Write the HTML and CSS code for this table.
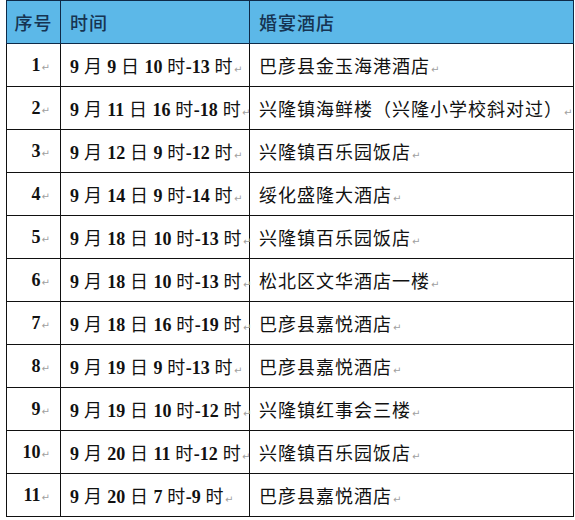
FILE: index.html
```html
<!DOCTYPE html>
<html lang="zh-CN">
<head>
<meta charset="utf-8">
<link rel="stylesheet" href="styles.css">
</head>
<body>
<table class="sched">
  <colgroup><col class="c1"><col class="c2"><col class="c3"></colgroup>
  <thead>
    <tr><th class="num">序号</th><th>时间</th><th>婚宴酒店</th></tr>
  </thead>
  <tbody>
    <tr><td class="num">1<span class="pm">↵</span></td><td class="t"><b>9</b> 月 <b>9</b> 日 <b>10</b> 时<b>-13</b> 时<span class="pm">↵</span></td><td>巴彦县金玉海港酒店<span class="pm">↵</span></td></tr>
    <tr><td class="num">2<span class="pm">↵</span></td><td class="t"><b>9</b> 月 <b>11</b> 日 <b>16</b> 时<b>-18</b> 时<span class="pm">↵</span></td><td>兴隆镇海鲜楼（兴隆小学校斜对过）<span class="pm">↵</span></td></tr>
    <tr><td class="num">3<span class="pm">↵</span></td><td class="t"><b>9</b> 月 <b>12</b> 日 <b>9</b> 时<b>-12</b> 时<span class="pm">↵</span></td><td>兴隆镇百乐园饭店<span class="pm">↵</span></td></tr>
    <tr><td class="num">4<span class="pm">↵</span></td><td class="t"><b>9</b> 月 <b>14</b> 日 <b>9</b> 时<b>-14</b> 时<span class="pm">↵</span></td><td>绥化盛隆大酒店<span class="pm">↵</span></td></tr>
    <tr><td class="num">5<span class="pm">↵</span></td><td class="t"><b>9</b> 月 <b>18</b> 日 <b>10</b> 时<b>-13</b> 时<span class="pm">↵</span></td><td>兴隆镇百乐园饭店<span class="pm">↵</span></td></tr>
    <tr><td class="num">6<span class="pm">↵</span></td><td class="t"><b>9</b> 月 <b>18</b> 日 <b>10</b> 时<b>-13</b> 时<span class="pm">↵</span></td><td>松北区文华酒店一楼<span class="pm">↵</span></td></tr>
    <tr><td class="num">7<span class="pm">↵</span></td><td class="t"><b>9</b> 月 <b>18</b> 日 <b>16</b> 时<b>-19</b> 时<span class="pm">↵</span></td><td>巴彦县嘉悦酒店<span class="pm">↵</span></td></tr>
    <tr><td class="num">8<span class="pm">↵</span></td><td class="t"><b>9</b> 月 <b>19</b> 日 <b>9</b> 时<b>-13</b> 时<span class="pm">↵</span></td><td>巴彦县嘉悦酒店<span class="pm">↵</span></td></tr>
    <tr><td class="num">9<span class="pm">↵</span></td><td class="t"><b>9</b> 月 <b>19</b> 日 <b>10</b> 时<b>-12</b> 时<span class="pm">↵</span></td><td>兴隆镇红事会三楼<span class="pm">↵</span></td></tr>
    <tr><td class="num">10<span class="pm">↵</span></td><td class="t"><b>9</b> 月 <b>20</b> 日 <b>11</b> 时<b>-12</b> 时<span class="pm">↵</span></td><td>兴隆镇百乐园饭店<span class="pm">↵</span></td></tr>
    <tr><td class="num">11<span class="pm">↵</span></td><td class="t"><b>9</b> 月 <b>20</b> 日 <b>7</b> 时<b>-9</b> 时<span class="pm">↵</span></td><td>巴彦县嘉悦酒店<span class="pm">↵</span></td></tr>
  </tbody>
</table>
</body>
</html>
```
FILE: styles.css
```css
html, body {
  margin: 0;
  padding: 0;
  background: #fff;
}
body {
  padding-left: 6px;
}
.sched {
  border-collapse: collapse;
  width: 567px;
  table-layout: fixed;
  font-family: "Liberation Serif", "Noto Sans CJK SC", serif;
  font-size: 18px;
  color: #111;
}
.c1 { width: 54px; }
.c2 { width: 189px; }
.c3 { width: 324px; }
.sched th, .sched td {
  border: 1.5px solid #111;
  height: 42px;
  padding: 0 0 0 9px;
  text-align: left;
  vertical-align: middle;
  white-space: nowrap;
  letter-spacing: 1px;
}
.sched th {
  background: #5cb8e8;
  color: #163452;
  font-family: "Noto Sans CJK SC", sans-serif;
  font-weight: 500;
  border-color: #0e2a48;
}
.sched th.num {
  padding: 0;
  text-align: center;
}
.sched td {
  font-family: "Liberation Serif", "Noto Sans CJK SC", serif;
}
.sched td.t {
  font-weight: normal;
  letter-spacing: 0.4px;
}
.sched td.t b {
  font-weight: bold;
  letter-spacing: 0;
}
.sched td.num {
  text-align: right;
  padding: 0 10px 0 0;
  font-weight: bold;
  letter-spacing: 0;
}
.pm {
  font-family: "DejaVu Sans", sans-serif;
  font-size: 10px;
  font-weight: normal;
  color: #a0a0a0;
  margin-left: 1px;
  letter-spacing: 0;
}
```
